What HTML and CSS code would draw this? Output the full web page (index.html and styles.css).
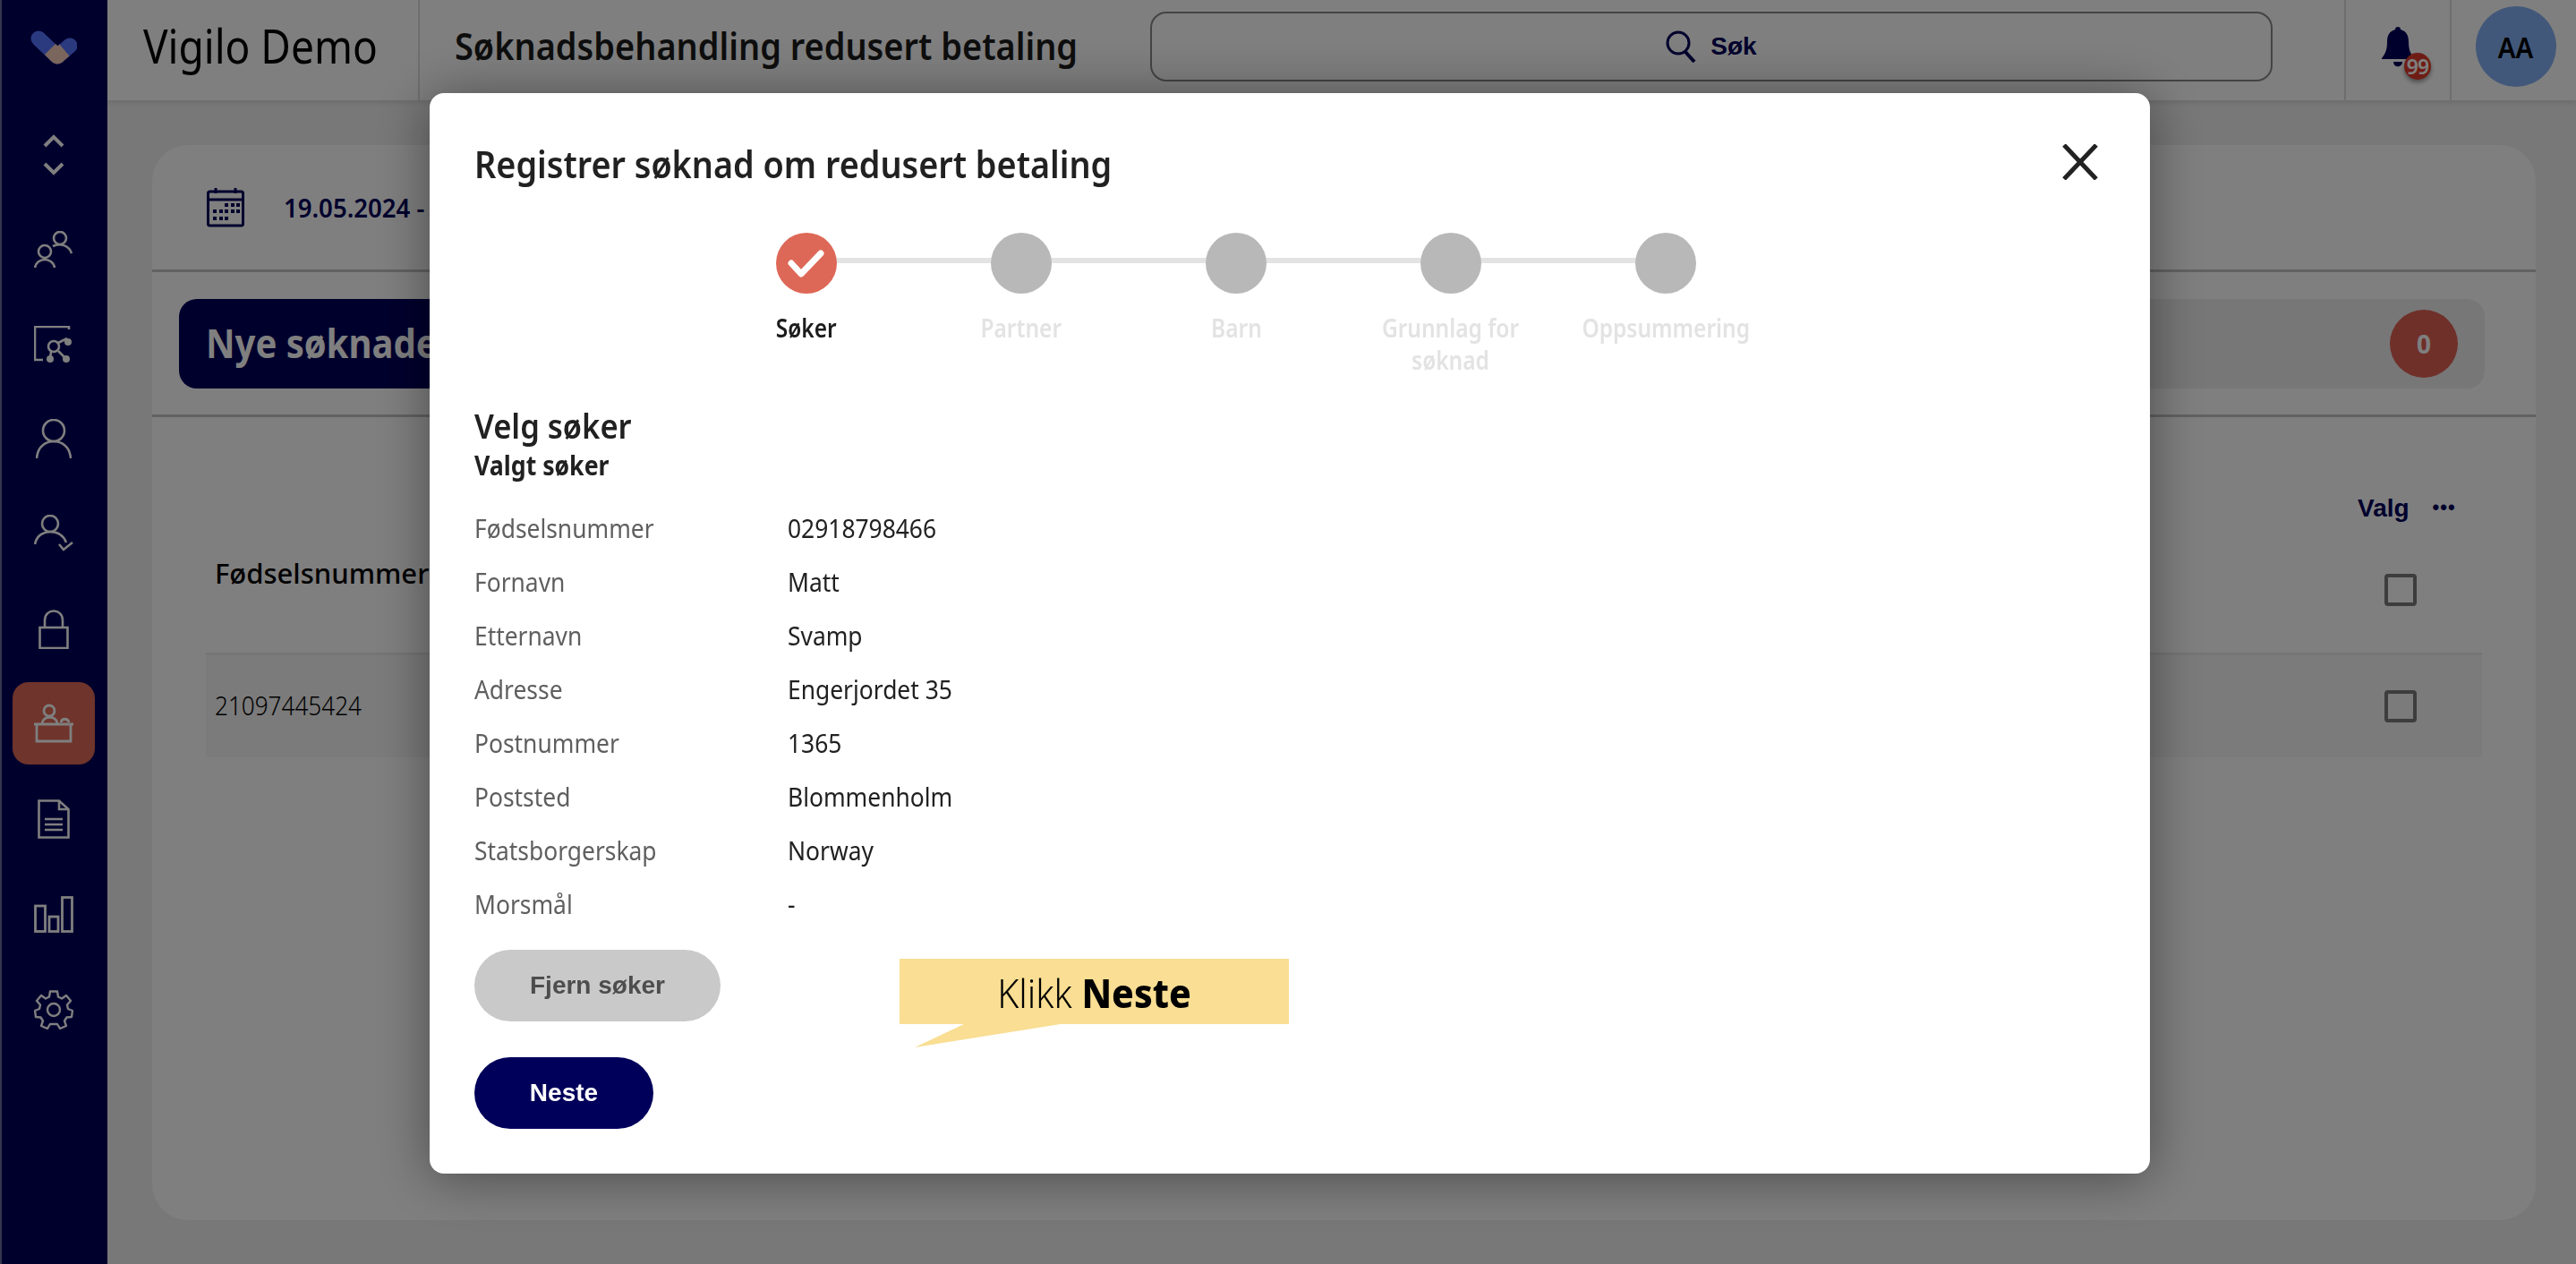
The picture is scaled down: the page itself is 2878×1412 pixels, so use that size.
FILE: index.html
```html
<!DOCTYPE html>
<html lang="no">
<head>
<meta charset="utf-8">
<title>Vigilo Demo</title>
<link rel="stylesheet" href="styles.css">
</head>
<body>
<div class="app">
  <nav class="sidebar">
    <svg class="logo" width="52" height="38" viewBox="0 0 52 38"><path d="M9 9 30 29 44 17" fill="none" stroke="#5674ff" stroke-width="17" stroke-linecap="round" stroke-linejoin="round"/><path d="M22 21 30 29 38 22" fill="none" stroke="#f4ccb8" stroke-width="17" stroke-linejoin="round"/></svg>
    <svg class="nav-chevrons" width="24" height="46" viewBox="0 0 24 46"><path d="M2 13 12 3 22 13M2 33 12 43 22 33" fill="none" stroke="#fff" stroke-width="4"/></svg>
    <svg class="nav-icon i-people" width="44" height="42" viewBox="0 0 44 42"><g fill="none" stroke="#fff" stroke-width="2.6"><circle cx="29" cy="8" r="7"/><path d="M21 17C29 13 39 16 42 25"/><circle cx="12" cy="23" r="7"/><path d="M1 41C3 29 21 29 23 41"/></g></svg>
    <svg class="nav-icon i-graph" width="44" height="42" viewBox="0 0 44 42"><g fill="none" stroke="#fff" stroke-width="2.6"><path d="M39 4V1H1V38H10"/><circle cx="22" cy="23" r="6"/><path d="M27 19 37 14M19 29 18 37M27 28 36 37"/></g><g fill="#fff"><circle cx="38" cy="18" r="4"/><circle cx="18" cy="37" r="4"/><circle cx="36" cy="37" r="4"/></g></svg>
    <svg class="nav-icon i-person" width="40" height="44" viewBox="0 0 40 44"><g fill="none" stroke="#fff" stroke-width="2.6"><circle cx="20" cy="13" r="12"/><path d="M1 44C2 30 12 25 20 25S38 30 39 44"/></g></svg>
    <svg class="nav-icon i-check" width="44" height="42" viewBox="0 0 44 42"><g fill="none" stroke="#fff" stroke-width="2.6"><circle cx="18" cy="10" r="9"/><path d="M1 33C3 22 12 19 18 19S32 21 36 31M28 33 33 39 43 31"/></g></svg>
    <svg class="nav-icon i-lock" width="34" height="44" viewBox="0 0 34 44"><g fill="none" stroke="#fff" stroke-width="2.6"><rect x="1.500" y="20" width="31" height="23"/><path d="M7 20V12C7 -2 27 -2 27 12V20"/></g></svg>
    <div class="nav-active"><svg width="44" height="44" viewBox="0 0 44 44"><g fill="none" stroke="#fff" stroke-width="2.800"><circle cx="17" cy="8" r="6"/><path d="M9 22C10 13 25 13 26 22M30 21C31 16 38 16 39 21M0 23H44M3 23V42H41V23"/></g></svg></div>
    <svg class="nav-icon i-doc" width="36" height="44" viewBox="0 0 36 44"><g fill="none" stroke="#fff" stroke-width="2.6"><path d="M1.500 1.500H24L34.500 11V42.500H1.500Z"/><path d="M24 1.500V11H34.500M8 22H28M8 28H28M8 34H28"/></g></svg>
    <svg class="nav-icon i-bars" width="44" height="41" viewBox="0 0 44 41"><g fill="none" stroke="#fff" stroke-width="2.8"><rect x="1.500" y="11" width="11" height="28.500"/><rect x="17" y="23" width="10" height="16.500"/><rect x="31.500" y="1.500" width="11" height="38"/></g></svg>
    <svg class="nav-icon i-gear" width="44" height="44" viewBox="0 0 44 44"><g fill="none" stroke="#fff" stroke-width="2.4" stroke-linejoin="round"><circle cx="22" cy="22" r="7"/><path d="M18 1.500H26L27 7.500 31 9.500 36 6 41 12 37 16.500 38 21 43 23 42 30 36.500 30.500 34 34.500 36 40 29 43 26 38 18 38 15 43 8 40 10 34.500 7.500 30.500 2 30 1 23 6 21 7 16.500 3 12 8 6 13 9.500 17 7.500Z"/></g></svg>
  </nav>
  <div class="main">
    <header class="topbar">
      <div class="brand"><span class="brand-text">Vigilo Demo</span></div>
      <h1 class="page-title">Søknadsbehandling redusert betaling</h1>
      <div class="search">
        <svg width="34" height="36" viewBox="0 0 34 36"><circle cx="14" cy="14" r="12" fill="none" stroke="#00005a" stroke-width="3"/><path d="M22 24 32 35" stroke="#00005a" stroke-width="4"/></svg>
        <span>Søk</span>
      </div>
      <div class="bell-cell">
        <svg width="36" height="45" viewBox="0 0 36 45"><path d="M18 0C20 0 21 1 21 3 28 5 30 10 30 17 30 25 32 30 36 35V36H0V35C4 30 6 25 6 17 6 10 8 5 15 3 15 1 16 0 18 0ZM13 39H23C23 46 13 46 13 39Z" fill="#00005a"/></svg>
        <span class="bell-badge">99</span>
      </div>
      <div class="avatar-cell"><div class="avatar"><span class="avatar-text">AA</span></div></div>
    </header>
    <section class="content">
      <div class="card">
        <div class="date-bar">
          <svg width="42" height="44" viewBox="0 0 42 44"><g fill="none" stroke="#00005a" stroke-width="3"><rect x="1.500" y="4" width="39" height="38" rx="2"/><path d="M1.500 13H40.500M10 0V6M32 0V6" /></g><g fill="#00005a"><rect x="20" y="17" width="4" height="4"/><rect x="27" y="17" width="4" height="4"/><rect x="33" y="17" width="4" height="4"/><rect x="7" y="24" width="4" height="4"/><rect x="14" y="24" width="4" height="4"/><rect x="20" y="24" width="4" height="4"/><rect x="27" y="24" width="4" height="4"/><rect x="33" y="24" width="4" height="4"/><rect x="7" y="32" width="4" height="4"/><rect x="14" y="32" width="4" height="4"/><rect x="20" y="32" width="4" height="4"/></g></svg>
          <span class="date-text">19.05.2024 - 19.06.2024</span>
        </div>
        <div class="filter-bar">
          <div class="filter">
            <div class="filter-active"><span class="filter-text">Nye søknader</span></div>
            <div class="count">0</div>
          </div>
        </div>
        <div class="table">
          <div class="table-tools"><span class="valg">Valg</span><span class="dots">•••</span></div>
          <div class="table-head"><span class="col-id">Fødselsnummer</span><span class="checkbox"></span></div>
          <div class="table-row"><span class="cell-id">21097445424</span><span class="checkbox"></span></div>
        </div>
      </div>
    </section>
  </div>
</div>

<div class="overlay">
  <div class="modal">
    <div class="modal-head">
      <h2 class="modal-title">Registrer søknad om redusert betaling</h2>
      <svg class="close" width="40" height="40" viewBox="0 0 40 40"><path d="M2 1 38 39M38 1 2 39" stroke="#222" stroke-width="5" fill="none"/></svg>
    </div>
    <ol class="stepper">
      <li class="step done"><span class="dot"><svg width="68" height="68" viewBox="0 0 68 68"><path d="M17 34 28 46 50 23" fill="none" stroke="#fff" stroke-width="7" stroke-linecap="round" stroke-linejoin="round"/></svg></span><span class="step-label">Søker</span></li>
      <li class="step"><span class="dot"></span><span class="step-label">Partner</span></li>
      <li class="step"><span class="dot"></span><span class="step-label">Barn</span></li>
      <li class="step"><span class="dot"></span><span class="step-label">Grunnlag for<br>søknad</span></li>
      <li class="step"><span class="dot"></span><span class="step-label">Oppsummering</span></li>
    </ol>
    <h3 class="section-title">Velg søker</h3>
    <h4 class="section-sub">Valgt søker</h4>
    <dl class="details">
      <div class="detail"><dt>Fødselsnummer</dt><dd>02918798466</dd></div>
      <div class="detail"><dt>Fornavn</dt><dd>Matt</dd></div>
      <div class="detail"><dt>Etternavn</dt><dd>Svamp</dd></div>
      <div class="detail"><dt>Adresse</dt><dd>Engerjordet 35</dd></div>
      <div class="detail"><dt>Postnummer</dt><dd>1365</dd></div>
      <div class="detail"><dt>Poststed</dt><dd>Blommenholm</dd></div>
      <div class="detail"><dt>Statsborgerskap</dt><dd>Norway</dd></div>
      <div class="detail"><dt>Morsmål</dt><dd>-</dd></div>
    </dl>
    <button class="btn btn-grey">Fjern søker</button>
    <button class="btn btn-navy">Neste</button>
    <div class="callout"><span class="callout-text">Klikk <b>Neste</b></span></div>
  </div>
</div>
</body>
</html>
```

FILE: styles.css
```css
* { box-sizing: border-box; }
html, body { margin: 0; height: 100%; overflow: hidden; }
body { font-family: "Noto Sans", sans-serif; color: #000; background: #f0f0f0; }
.app { display: grid; grid-template-columns: 120px 1fr; height: 1412px; }

.sidebar { background: #00005a; border-left: 2px solid #6c6c9c; display: flex; flex-direction: column; align-items: center; padding-top: 34px; padding-right: 2px; }
.logo { margin-bottom: 78px; }
.nav-icon { display: block; }
.sidebar svg { flex: none; }
.nav-chevrons { margin-bottom: 62px; }
.i-people { margin-bottom: 64px; }
.i-graph { margin-bottom: 62px; }
.i-person { margin-bottom: 63px; }
.i-check { margin-bottom: 64px; }
.i-lock { margin-bottom: 37px; }
.nav-active { width: 92px; height: 92px; background: #de6857; border-radius: 18px; display: flex; align-items: center; justify-content: center; margin-bottom: 39px; }
.i-doc { margin-bottom: 64px; }
.i-bars { margin-bottom: 64px; }

.main { display: flex; flex-direction: column; min-width: 0; }
.topbar { height: 112px; background: #fff; display: flex; align-items: stretch; box-shadow: 0 2px 6px rgba(0,0,0,.12); position: relative; }
.brand { width: 349px; padding-left: 40px; font-size: 52px; font-weight: 400; line-height: 102px; color: #000; border-right: 2px solid #ddd; }
.brand-text { display: inline-block; transform: scaleX(.885); transform-origin: left center; white-space: nowrap; }
.page-title { width: 777px; margin: 0 0 0 39px; font-size: 41px; font-weight: 600; line-height: 102px; color: #1c1c1c; white-space: nowrap; transform: scaleX(.925); transform-origin: left center; }
.search { width: 1254px; height: 78px; margin-top: 13px; border: 2.500px solid #888; border-radius: 18px; display: flex; align-items: center; justify-content: center; gap: 16px; font-family: "Liberation Sans", sans-serif; font-size: 28px; font-weight: 700; color: #00005a; }
.bell-cell { width: 120px; margin-left: 80px; border-left: 2px solid #ddd; border-right: 2px solid #ddd; position: relative; padding: 30px 0 0 40px; }
.bell-badge { position: absolute; left: 65px; top: 59px; width: 30px; height: 30px; border-radius: 50%; background: #de3a28; color: #fff; font-size: 23px; font-weight: 600; line-height: 30px; text-align: center; letter-spacing: -1px; box-shadow: 0 3px 5px rgba(0,0,0,.4); }
.avatar-cell { flex: 1; padding: 7px 0 0 27px; }
.avatar { width: 90px; height: 90px; border-radius: 50%; background: #84b0f4; display: flex; align-items: center; justify-content: center; font-size: 32px; font-weight: 600; }
.avatar-text { transform: scaleX(.92); }

.content { flex: 1; padding: 50px 45px 49px 50px; min-height: 0; background: #f0f0f0; }
.card { height: 100%; background: #fff; border-radius: 40px; }
.date-bar { height: 142px; border-bottom: 3px solid #c4c4c4; display: flex; align-items: center; gap: 44px; padding-left: 61px; }
.date-text { font-size: 29px; font-weight: 600; color: #00005a; white-space: nowrap; transform: scaleX(.95); transform-origin: left center; }
.filter-bar { height: 162px; border-bottom: 3px solid #c4c4c4; padding: 30px 57px 0 30px; }
.filter { height: 100px; background: #eee; border-radius: 20px; display: flex; align-items: center; justify-content: space-between; }
.filter-active { width: 900px; height: 100px; padding-left: 30px; background: #00005a; border-radius: 20px; color: #fff; font-size: 44px; font-weight: 700; line-height: 98px; }
.filter-text { display: inline-block; transform: scaleX(.91); transform-origin: left center; white-space: nowrap; }
.count { width: 76px; height: 76px; margin-right: 30px; border-radius: 50%; background: #de6053; color: #fff; font-size: 28px; font-weight: 700; text-align: center; line-height: 76px; }
.table { padding: 0 60px; }
.table-tools { height: 102px; padding: 87px 0 0 2404px; display: flex; gap: 26px; font-family: "Liberation Sans", sans-serif; color: #00005a; font-size: 28px; font-weight: 700; line-height: 30px; }
.dots { font-size: 22px; letter-spacing: 1px; line-height: 28px; }
.table-head { height: 164px; display: flex; align-items: center; justify-content: space-between; padding: 0 73px 0 10px; border-bottom: 3px solid #eaeaea; }
.table-head .checkbox { margin-top: 20px; }
.col-id { font-size: 31px; font-weight: 500; margin-top: -18px; }
.table-row { height: 114px; background: #f6f6f6; display: flex; align-items: center; justify-content: space-between; padding: 0 73px 0 10px; }
.cell-id { font-size: 30px; font-weight: 300; margin-top: -4px; transform: scaleX(.87); transform-origin: left center; }
.checkbox { width: 36px; height: 36px; border: 4px solid #7a7a7a; border-radius: 4px; }

.overlay { position: fixed; inset: 0; background: rgba(0,0,0,.5); }
.modal { position: absolute; left: 480px; top: 104px; width: 1922px; height: 1207px; background: #fff; border-radius: 16px; padding: 0 50px; box-shadow: 0 4px 60px rgba(0,0,0,.42); }
.modal-head { display: flex; justify-content: space-between; align-items: center; height: 156px; }
.modal-title { margin: 0; font-size: 42px; font-weight: 600; color: #212121; white-space: nowrap; transform: scaleX(.9); transform-origin: left center; }
.close { margin: -2px 8px 0 0; flex: none; }
.stepper { list-style: none; margin: 0; padding: 0 0 0 251px; display: flex; height: 191px; }
.step { width: 240px; position: relative; display: flex; flex-direction: column; align-items: center; }
.step::after { content: ""; position: absolute; left: 50%; top: 28px; width: 100%; height: 6px; background: #e3e3e3; }
.step:last-child::after { display: none; }
.dot { width: 68px; height: 68px; border-radius: 50%; background: #b8b8b8; position: relative; z-index: 1; display: block; }
.dot svg { display: block; }
.done .dot { background: #de6857; }
.step-label { margin-top: 20px; font-size: 28px; font-weight: 600; line-height: 36px; color: #e3e3e3; text-align: center; white-space: nowrap; transform: scaleX(.875); }
.done .step-label { color: #1c1c1c; }
.section-title { margin: 0; font-size: 38px; font-weight: 600; line-height: 49px; color: #212121; white-space: nowrap; transform: scaleX(.91); transform-origin: left center; }
.section-sub { margin: 0 0 19px; font-size: 30px; font-weight: 700; line-height: 40px; color: #212121; white-space: nowrap; transform: scaleX(.89); transform-origin: left center; }
.details { margin: 0; }
.detail { display: flex; height: 60px; align-items: center; font-size: 29px; }
.detail dt { width: 350px; color: #5f5f5f; transform: scaleX(.91); transform-origin: left center; }
.detail dd { margin: 0; color: #212121; transform: scaleX(.91); transform-origin: left center; }
.btn { display: block; height: 80px; border: 0; border-radius: 40px; font-family: "Liberation Sans", sans-serif; font-size: 28px; font-weight: 700; text-align: center; padding: 0; }
.btn-grey { width: 275px; margin-top: 22px; background: #c9c9c9; color: #4d4d4d; }
.btn-navy { width: 200px; margin-top: 40px; background: #00005a; color: #fff; }
.callout { position: absolute; left: 525px; top: 967px; width: 435px; height: 73px; background: #f9de93; font-size: 44px; font-weight: 300; color: #000; text-align: center; line-height: 76px; }
.callout-text { display: inline-block; transform: scaleX(.93); white-space: nowrap; }
.callout b { font-weight: 800; }
.callout::after { content: ""; position: absolute; left: 17px; top: 73px; width: 163px; height: 26px; background: #f9de93; clip-path: polygon(55px 0, 0 100%, 100% 0); }
```
